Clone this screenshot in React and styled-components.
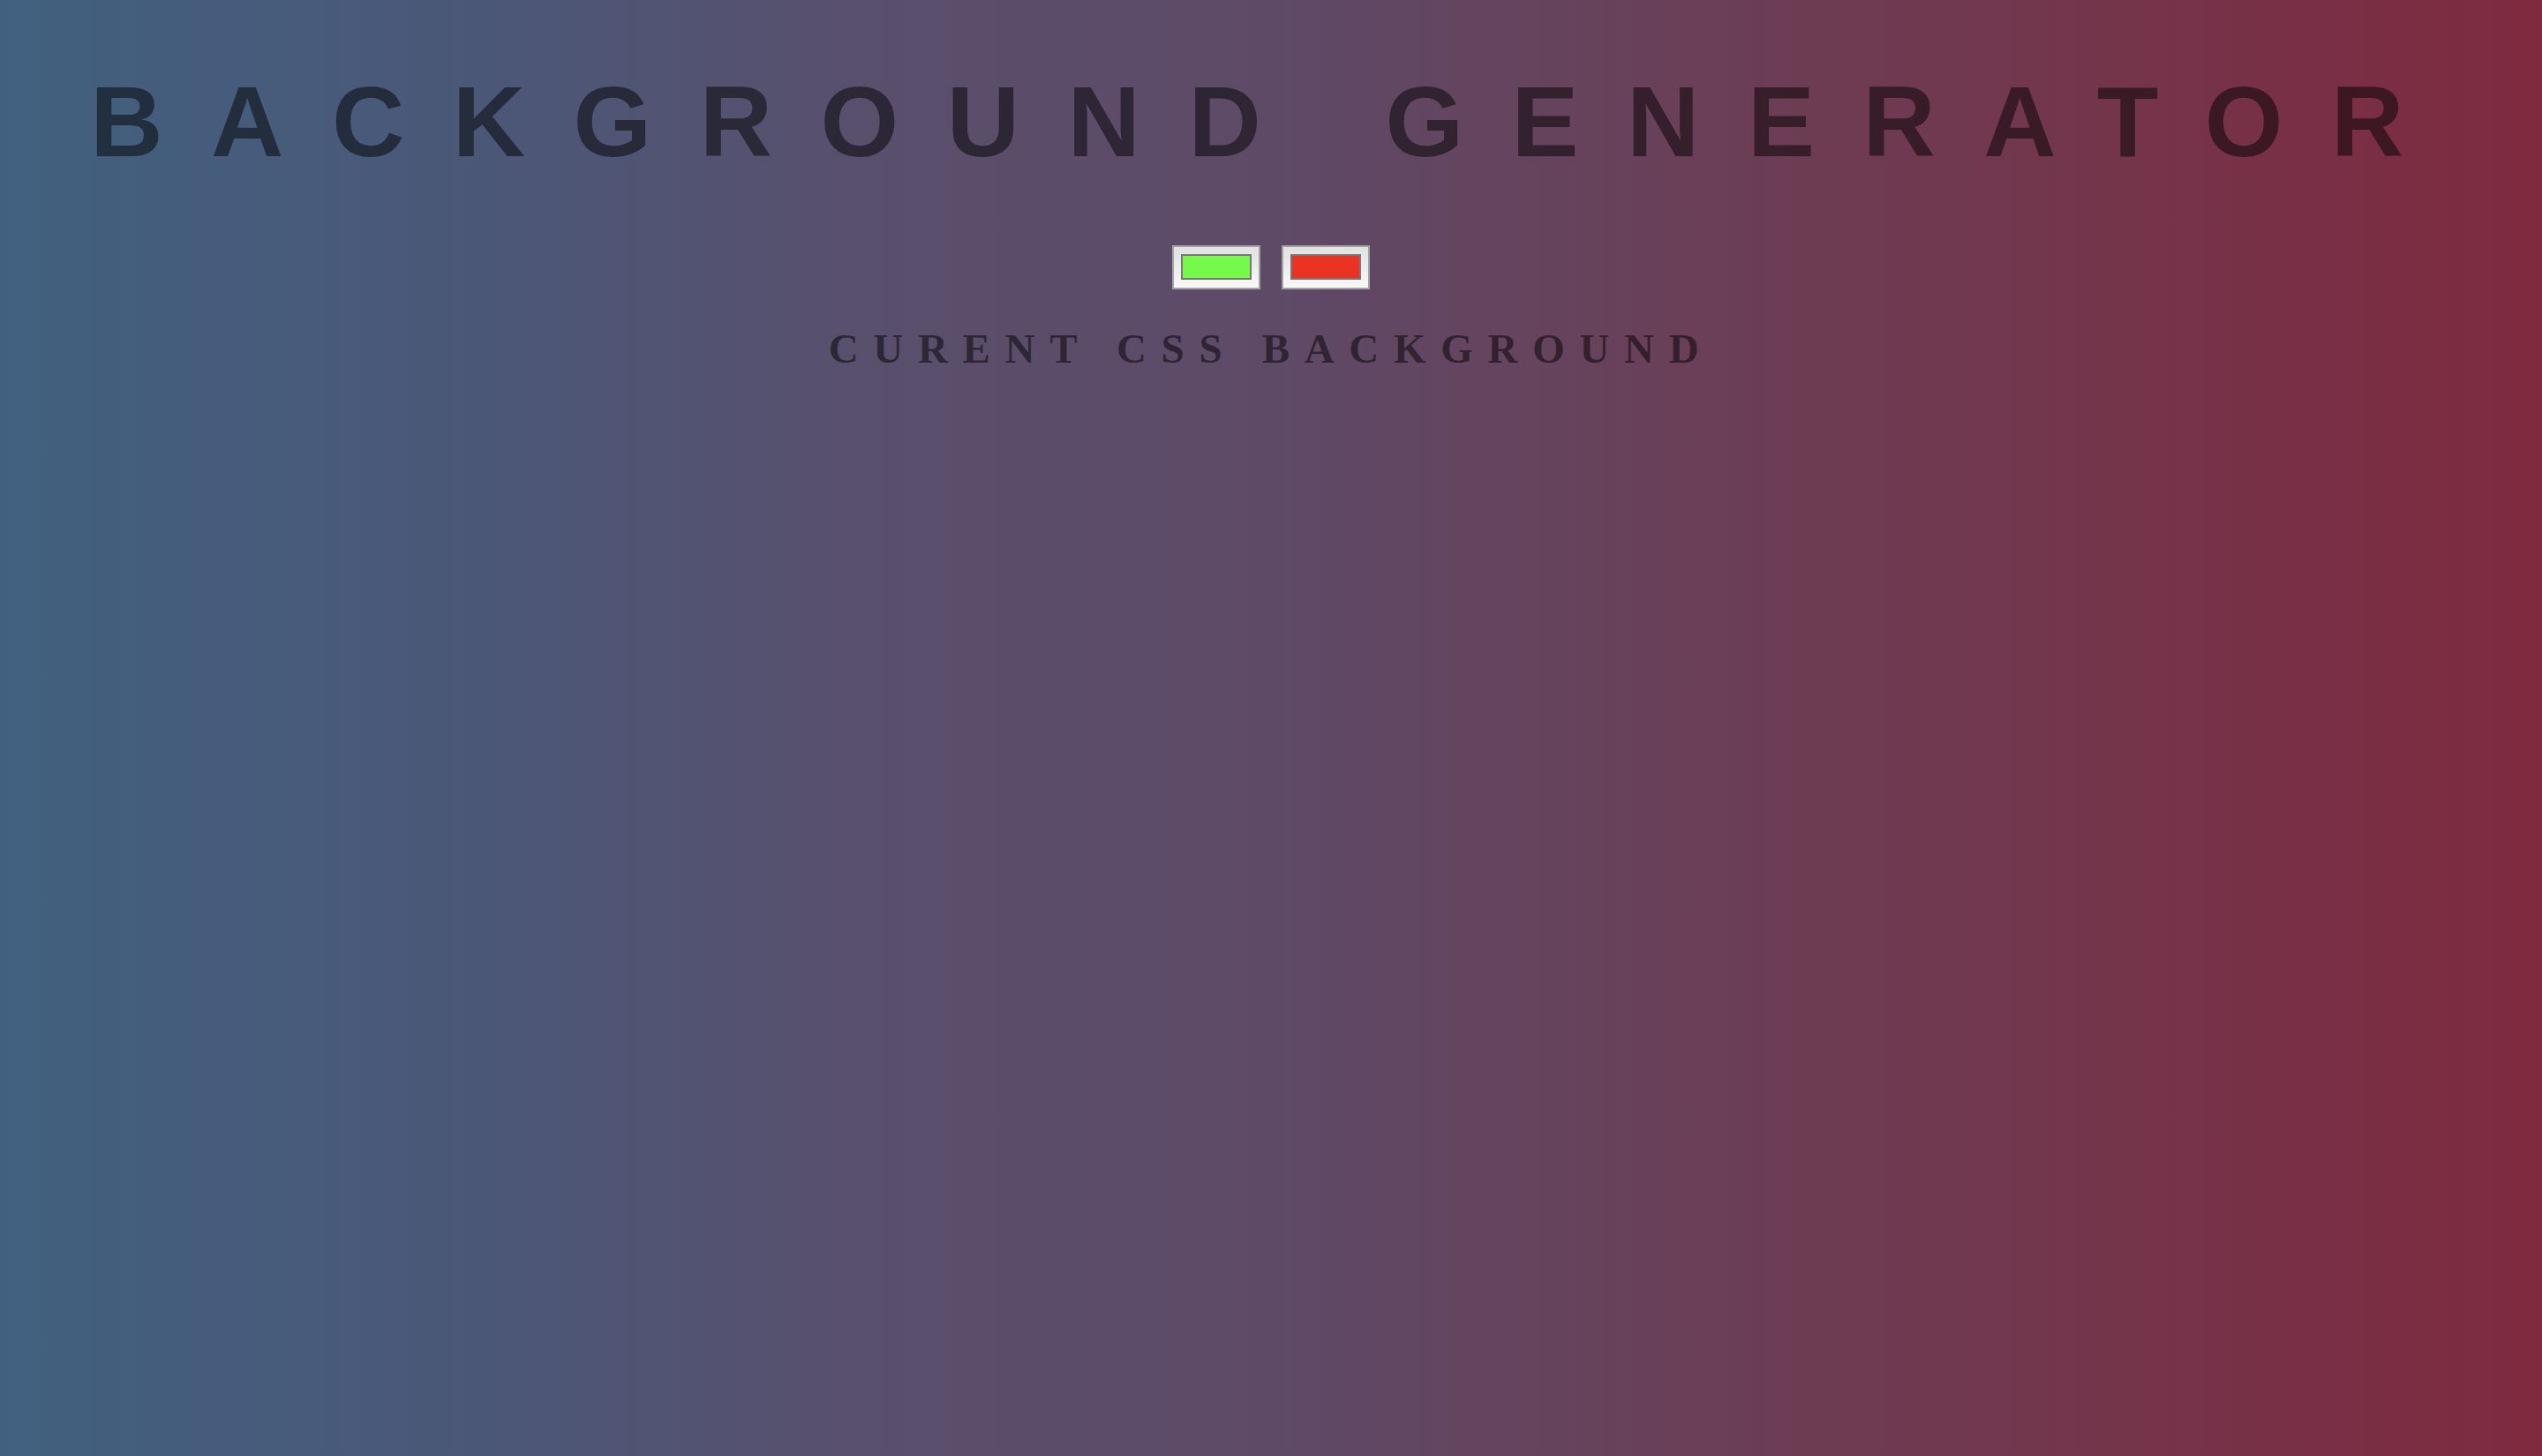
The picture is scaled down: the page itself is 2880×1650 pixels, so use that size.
import React, { useState } from 'react';
import styled, { createGlobalStyle } from 'styled-components';

const GlobalStyle = createGlobalStyle`
  html, body {
    margin: 0;
    padding: 0;
  }
  body {
    min-height: 100vh;
    background: linear-gradient(
      to right,
      #41607f 0%,
      #4c5777 20%,
      #594f6c 35%,
      #5e4a67 50%,
      #6c3d54 70%,
      #7e2a3f 100%
    );
    color: rgba(0, 0, 0, 0.5);
    text-align: center;
    text-transform: uppercase;
  }
`;

const Page = styled.main`
  min-height: 100vh;
  display: flex;
  flex-direction: column;
  align-items: center;
  padding-top: 81px;
  box-sizing: border-box;
`;

const Title = styled.h1`
  margin: 0;
  font-family: "Liberation Sans", Arial, sans-serif;
  font-weight: 700;
  font-size: 114px;
  line-height: 1;
  letter-spacing: 54.5px;
  color: rgba(0, 0, 0, 0.5);
  white-space: nowrap;
`;

const Pickers = styled.div`
  display: flex;
  gap: 24px;
  margin-top: 83px;
`;

const ColorPicker = styled.input.attrs({ type: 'color' })`
  -webkit-appearance: none;
  appearance: none;
  width: 100px;
  height: 50px;
  box-sizing: border-box;
  margin: 0;
  padding: 8px 8px 9px;
  border: 2px solid #a3a3a3;
  background: linear-gradient(#e1e1e1, #f8f8f8);
  cursor: pointer;

  &::-webkit-color-swatch-wrapper {
    padding: 0;
  }
  &::-webkit-color-swatch {
    border: 2px solid #777777;
    border-radius: 0;
  }
`;

const Subtitle = styled.h3`
  margin: 44px 0 0;
  font-family: "Liberation Serif", "Times New Roman", serif;
  font-weight: 700;
  font-size: 47px;
  line-height: 1;
  letter-spacing: 16.7px;
  color: rgba(0, 0, 0, 0.5);
`;

export default function App() {
  const [left, setLeft] = useState('#75fa4c');
  const [right, setRight] = useState('#ea3323');

  return (
    <>
      <GlobalStyle />
      <Page>
        <Title>Background Generator</Title>
        <Pickers>
          <ColorPicker value={left} onChange={(e) => setLeft(e.target.value)} />
          <ColorPicker value={right} onChange={(e) => setRight(e.target.value)} />
        </Pickers>
        <Subtitle>Curent CSS Background</Subtitle>
      </Page>
    </>
  );
}
